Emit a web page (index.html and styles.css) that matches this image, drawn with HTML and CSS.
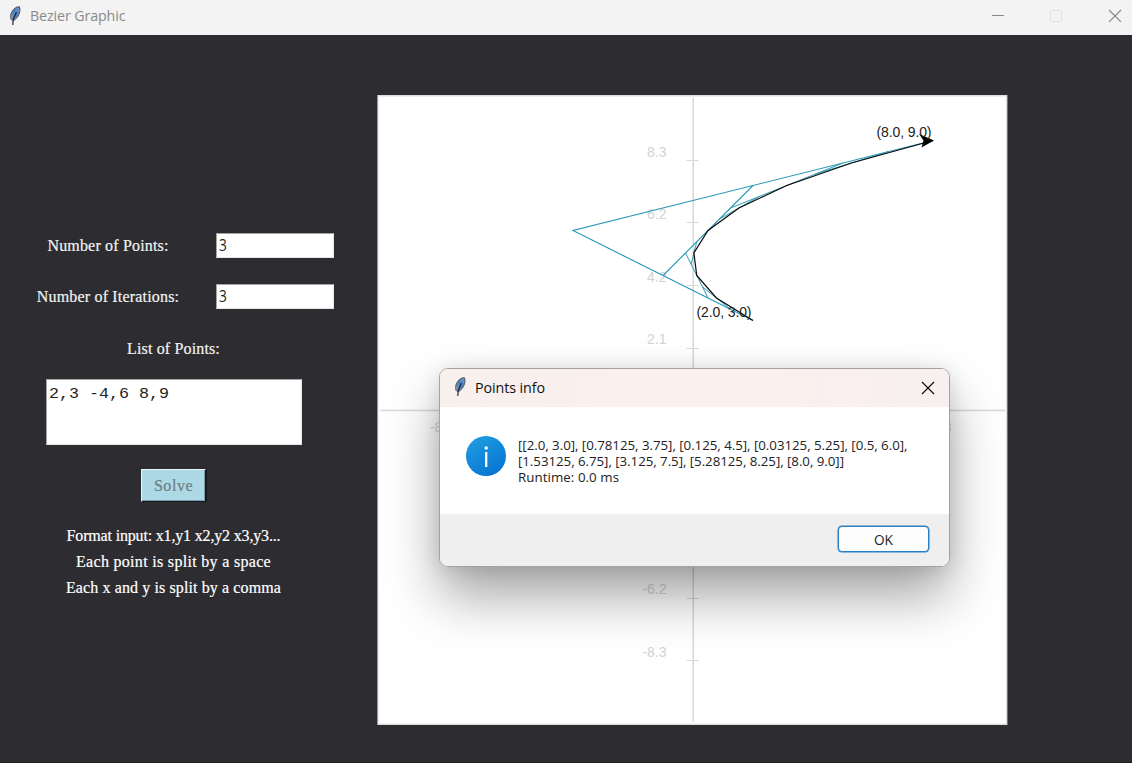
FILE: index.html
```html
<!DOCTYPE html>
<html lang="en">
<head>
<meta charset="utf-8">
<title>Bezier Graphic</title>
<link rel="stylesheet" href="styles.css">
</head>
<body>
<svg width="0" height="0" class="defs">
  <defs>
    <linearGradient id="quill" x1="1" y1="0" x2="0" y2="1">
      <stop offset="0" stop-color="#6f9bce"/><stop offset=".5" stop-color="#4f80bd"/><stop offset="1" stop-color="#8c9aaa"/>
    </linearGradient>
    <symbol id="feather" viewBox="0 0 12 20">
      <path d="M3.400 14.500C.7 13.500 1 8.500 3.500 4.800 5.500 1.800 8.500.5 10.400.8 11.800 4.200 10.300 9.500 7.300 12.300 6 13.800 5 14.500 4.200 14.600Z" fill="url(#quill)" stroke="#39424f" stroke-width=".9"/>
      <path d="M3.800 19 4.200 13.500 7.500 6" fill="none" stroke="#182436" stroke-width="1.200"/>
      <path d="M2 8.500 1.800 12.500 3.500 14.500" fill="none" stroke="#999" stroke-width=".8"/>
    </symbol>
  </defs>
</svg>
<div class="window">
  <header class="titlebar">
    <svg class="feather"><use href="#feather"/></svg>
    <span class="title">Bezier Graphic</span>
    <svg class="controls" width="132" height="13" viewBox="0 0 132 13">
      <path d="M0 6.500h12" stroke="#888"/>
      <rect x="58.500" y="1.500" width="11" height="11" rx="1.500" fill="none" stroke="#dedede"/>
      <path d="M117 1 129 13M129 1 117 13" stroke="#888" stroke-width="1.100"/>
    </svg>
  </header>
  <main class="content">
    <section class="form">
      <div class="row"><span class="label l1">Number of Points:</span><div class="entry"><span>3</span></div></div>
      <div class="row"><span class="label l2">Number of Iterations:</span><div class="entry"><span>3</span></div></div>
      <div class="list-label"><span class="l3">List of Points:</span></div>
      <div class="textarea"><span>2,3 -4,6 8,9</span></div>
      <div class="solve"><span>Solve</span></div>
      <div class="hints">
        <span class="h1">Format input: x1,y1 x2,y2 x3,y3...</span>
        <span class="h2">Each point is split by a space</span>
        <span class="h3">Each x and y is split by a comma</span>
      </div>
    </section>
    <svg class="plot" width="631" height="630" viewBox="377 95 631 630">
      <rect x="377.400" y="95" width="630" height="630" fill="#dfdfe0"/>
      <rect x="378.400" y="96.500" width="627.500" height="627" fill="#fff"/>
      <g stroke="#d8d8d8" stroke-width="1.500">
        <path d="M693.250 97.500V722M380 410.500H1005"/>
        <path stroke-width="1" d="M686.500 160.500h12M686.500 222.500h12M686.500 285.500h12M686.500 348.500h12M686.500 473.500h12M686.500 535.500h12M686.500 598.500h12M686.500 660.500h12"/>
      </g>
      <g class="axis-text">
        <text x="647" y="156.500" textLength="19.500">8.3</text>
        <text x="647" y="219" textLength="19.500">6.2</text>
        <text x="647" y="281.500" textLength="19.500">4.2</text>
        <text x="647" y="344" textLength="19.500">2.1</text>
        <text x="642.500" y="594" textLength="24">-6.2</text>
        <text x="642.500" y="656.500" textLength="24">-8.3</text>
        <text x="430" y="431.500" textLength="24">-8.3</text>
        <text x="932" y="431.500" textLength="19.500">8.3</text>
      </g>
      <g fill="none" stroke="#2c9ab7" stroke-width="1">
        <path stroke-width="1.150" d="M753 320.500 573 230.500 933 140.500M663 275.500 753 185.500"/>
        <path d="M708 298 685.500 253M730.500 208 843 163"/>
        <path d="M730.500 309.250 702.400 286.750M691.100 264.250 696.750 241.750M719.250 219.250 758.600 196.750M814.900 174.250 888 151.750"/>
      </g>
      <path d="M753 320.500 716.400 298 696.750 275.500 693.900 253 708 230.500 738.900 208 786.750 185.500 851.400 163 933 140.500" fill="none" stroke="#0a0a0a" stroke-width="1.200"/>
      <path d="M934 140.500 919 134 923.500 140.500 921.500 147.500Z"/>
      <g class="point-text">
        <text x="876.500" y="136.500" textLength="55">(8.0, 9.0)</text>
        <text x="696.500" y="316.500" textLength="55">(2.0, 3.0)</text>
      </g>
    </svg>
  </main>
</div>
<div class="shadow-clip"><div class="shadow"></div></div>
<div class="dialog">
  <div class="dialog-title">
    <svg class="feather"><use href="#feather"/></svg>
    <span class="name">Points info</span>
    <svg class="close" width="14" height="14" viewBox="0 0 14 14"><path d="M1 1 13 13M13 1 1 13" stroke="#111" stroke-width="1.200"/></svg>
  </div>
  <div class="dialog-body">
    <svg width="40" height="40" viewBox="0 0 40 40">
      <defs><linearGradient id="blue" x1="0" y1="0" x2=".6" y2="1"><stop offset="0" stop-color="#229fe2"/><stop offset="1" stop-color="#0877d3"/></linearGradient></defs>
      <circle cx="20" cy="20" r="20" fill="url(#blue)"/>
      <circle cx="20.200" cy="12" r="1.700" fill="#fff"/><path d="M20.200 16V31" stroke="#fff" stroke-width="2.300"/>
    </svg>
    <svg class="message" width="400" height="56" viewBox="0 0 400 56">
      <text x="0" y="15" textLength="389.500">[[2.0, 3.0], [0.78125, 3.75], [0.125, 4.5], [0.03125, 5.25], [0.5, 6.0],</text>
      <text x="0" y="31" textLength="326">[1.53125, 6.75], [3.125, 7.5], [5.28125, 8.25], [8.0, 9.0]]</text>
      <text x="0" y="47" textLength="101">Runtime: 0.0 ms</text>
    </svg>
  </div>
  <div class="dialog-foot"><div class="ok"><span>OK</span></div></div>
</div>
</body>
</html>
```
FILE: styles.css
```css
* { box-sizing: border-box; }
body { margin: 0; width: 1132px; height: 763px; overflow: hidden; background: #2d2c30; }
.defs { position: absolute; }
.window { display: flex; flex-direction: column; height: 763px; border-bottom: 1px solid #201c20; }
.titlebar { display: flex; align-items: center; height: 35px; padding: 0 11px 4px 9px; background: #f3f3f3; flex: none; }
.feather { width: 12px; height: 20px; flex: none; }
.title { margin-left: 9px; font: 14.3px "Open Sans", sans-serif; color: #8a8a8a; letter-spacing: -0.14px; white-space: nowrap; }
.controls { margin-left: auto; margin-right: -3px; }
.content { display: flex; flex: 1; background: #2d2c30; }
.form { width: 377px; padding-top: 198px; display: flex; flex-direction: column; font: 16px/20px "Liberation Serif", serif; color: #f2f2f2; white-space: nowrap; -webkit-text-stroke: 0.2px; }
.row { display: flex; align-items: center; height: 25px; margin-bottom: 26px; }
.label { width: 216px; padding-top: 1px; text-align: center; }
.l1 { letter-spacing: 0.17px; }
.l2 { letter-spacing: 0.18px; }
.l3 { letter-spacing: 0.15px; }
.entry { width: 118px; height: 25px; padding: 1px 0 0 2px; font: 15.5px/20px "Open Sans", sans-serif; background: #fff; color: #222; border: 1px solid #a5a5a5; border-right-color: #e6e6e6; border-bottom-color: #e6e6e6; -webkit-text-stroke: 0; }
.entry span { display: inline-block; transform: scaleX(.88); transform-origin: left; }
.list-label { width: 347px; height: 25px; padding-top: 1px; line-height: 25px; text-align: center; }
.textarea { width: 256px; height: 66px; margin: 19px 0 0 46px; padding: 4px 2px; background: #fff; border: 1px solid #a5a5a5; border-right-color: #e6e6e6; border-bottom-color: #e6e6e6; color: #222; font: 16.67px/18px "Liberation Mono", monospace; -webkit-text-stroke: 0; }
.textarea span { display: inline-block; transform: translateY(1px) scaleY(.9); }
.solve { width: 65px; height: 33px; margin: 24px 0 0 141px; border: 1px solid; border-color: #e8f5f8 #15191b #15191b #e8f5f8; background: #add8e6; box-shadow: inset -1px -1px #7e9fa9, 1px 0 #15191b; color: #6d7d84; text-align: center; line-height: 32px; font-size: 16px; letter-spacing: .55px; }
.hints { width: 347px; margin-top: 21px; display: flex; flex-direction: column; align-items: center; line-height: 26px; color: #fff; }
.h1 { letter-spacing: -0.17px; }
.h2 { letter-spacing: 0.31px; }
.h3 { letter-spacing: 0.11px; }
.plot { margin-top: 60px; flex: none; }
.axis-text { font: 14px "Liberation Sans", sans-serif; fill: #d3d3d3; }
.point-text { font: 14px "Liberation Sans", sans-serif; fill: #222; }
.shadow-clip { position: absolute; left: 378px; top: 96px; width: 628px; height: 628px; overflow: hidden; }
.shadow { position: absolute; left: 62px; top: 273px; width: 509px; height: 198px; border-radius: 8px; box-shadow: 0 29px 54px rgba(0,0,0,.36), 0 1px 20px rgba(0,0,0,.12); }
.dialog { position: absolute; left: 439px; top: 368px; width: 511px; height: 199px; border: 1px solid #a2a2a2; border-radius: 9px; overflow: hidden; background: #fff; }
.dialog-title { display: flex; align-items: center; height: 38px; padding: 0 14px; background: linear-gradient(90deg, #f8f0ed, #fbf1ed 50%, #f8eff0); }
.dialog-title .feather { margin-top: -2px; }
.name { margin: -2px 0 0 9px; font: 14.3px "Open Sans", sans-serif; color: #111; white-space: nowrap; letter-spacing: -0.1px; }
.close { margin-left: auto; }
.dialog-body { display: flex; height: 107px; padding: 29px 0 0 26px; }
.message { margin: -1.5px 0 0 12px; font: 13.3px "Open Sans", sans-serif; fill: #222; -webkit-text-stroke: 0.15px #222; }
.dialog-foot { height: 53px; background: #efefef; display: flex; justify-content: flex-end; padding: 12px 20px 0 0; }
.ok { width: 91px; height: 26px; border: 1px solid #2880c7; border-radius: 4px; box-shadow: 0 0 0 .5px #2880c7; background: #fdfdfd; text-align: center; font: 13.6px/25px "Open Sans", sans-serif; color: #222; }
```
